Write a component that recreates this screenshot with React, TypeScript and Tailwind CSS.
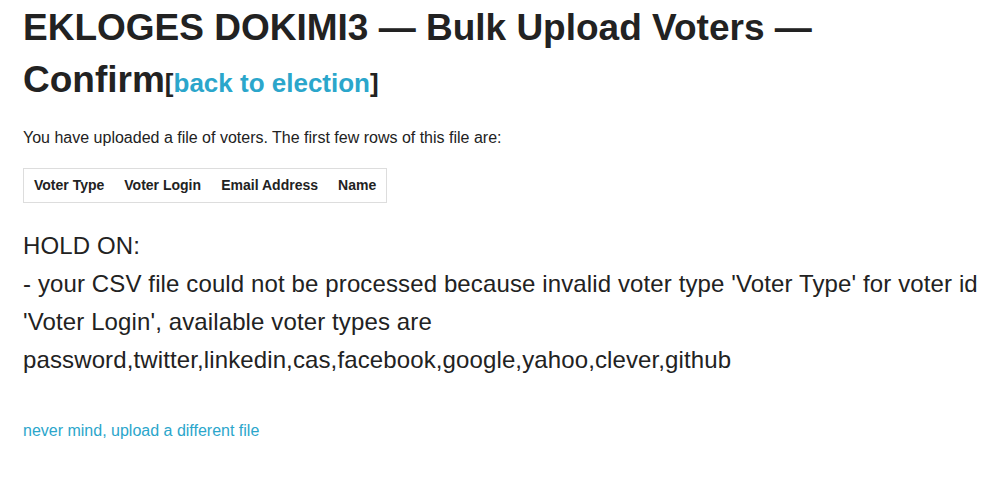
export default function App() {
  const font = { fontFamily: '"Liberation Sans", Arial, sans-serif' };
  return (
    <div className="min-h-[483px] bg-white px-[23px] pt-[2px] text-[#222222]" style={font}>
      <h1 className="text-[37px] font-bold leading-[52px]">
        EKLOGES DOKIMI3 — Bulk Upload Voters — Confirm
        <span className="text-[26px] leading-none">
          [<a href="#" className="text-[#2ba6cb]">back to election</a>]
        </span>
      </h1>

      <p className="mt-[21px] text-[16px] leading-[22.4px]">
        You have uploaded a file of voters. The first few rows of this file are:
      </p>

      <table className="mt-[19px] border border-[#dddddd] text-left text-[14px] font-bold">
        <thead>
          <tr>
            <th className="w-[89px] px-[10px] py-[8px] leading-[17px] whitespace-nowrap">Voter Type</th>
            <th className="w-[97px] px-[10px] py-[8px] leading-[17px] whitespace-nowrap">Voter Login</th>
            <th className="w-[115px] px-[10px] py-[8px] leading-[17px] whitespace-nowrap">Email Address</th>
            <th className="w-[57px] px-[10px] py-[8px] leading-[17px] whitespace-nowrap">Name</th>
          </tr>
        </thead>
      </table>

      <div className="mt-[24px] text-[24px] leading-[38px] tracking-[0.12px]">
        HOLD ON:
        <br />
        - your CSV file could not be processed because invalid voter type 'Voter Type' for voter id 'Voter Login', available voter types are password,twitter,linkedin,cas,facebook,google,yahoo,clever,github
      </div>

      <a href="#" className="mt-[41px] block w-fit text-[16px] leading-[22.4px] text-[#2ba6cb]">
        never mind, upload a different file
      </a>
    </div>
  );
}
